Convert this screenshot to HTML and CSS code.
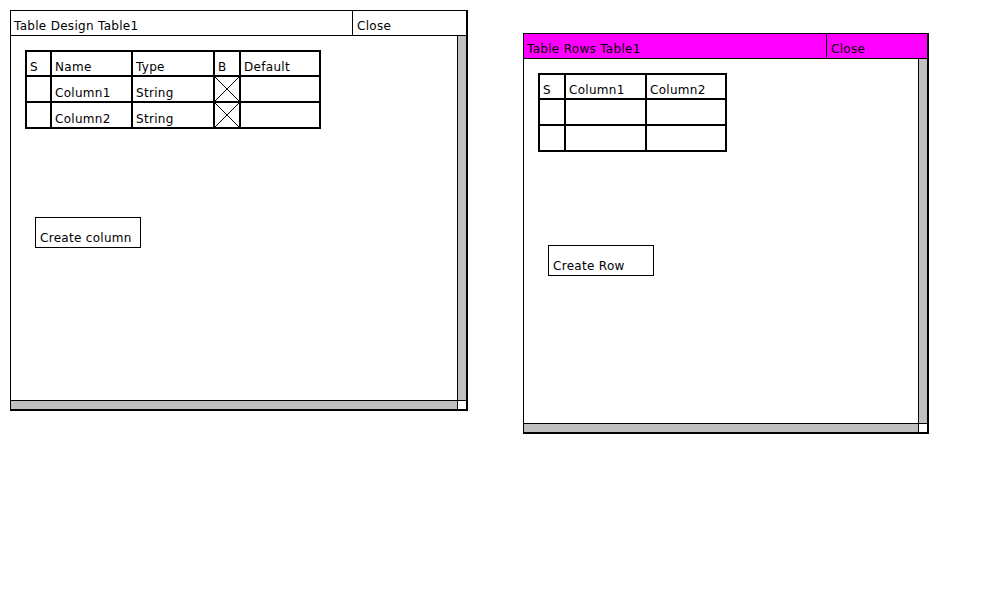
FILE: index.html
```html
<!DOCTYPE html>
<html>
<head>
<meta charset="utf-8">
<title>Tables</title>
<link rel="stylesheet" href="styles.css">
</head>
<body>
<div class="window w1">
  <div class="titlebar">
    <div class="title">Table Design Table1</div>
    <div class="close">Close</div>
  </div>
  <div class="body">
    <div class="content">
      <div class="grid design">
        <div class="cell">S</div>
        <div class="cell">Name</div>
        <div class="cell">Type</div>
        <div class="cell">B</div>
        <div class="cell">Default</div>
        <div class="cell"></div>
        <div class="cell">Column1</div>
        <div class="cell">String</div>
        <div class="cell cross"><svg viewBox="0 0 24 24" preserveAspectRatio="none"><line x1="0" y1="0" x2="24" y2="24"/><line x1="24" y1="0" x2="0" y2="24"/></svg></div>
        <div class="cell"></div>
        <div class="cell"></div>
        <div class="cell">Column2</div>
        <div class="cell">String</div>
        <div class="cell cross"><svg viewBox="0 0 24 24" preserveAspectRatio="none"><line x1="0" y1="0" x2="24" y2="24"/><line x1="24" y1="0" x2="0" y2="24"/></svg></div>
        <div class="cell"></div>
      </div>
      <div class="btn btn-column">Create column</div>
    </div>
    <div class="vscroll"></div>
    <div class="hscroll"></div>
    <div class="corner"></div>
  </div>
</div>

<div class="window w2">
  <div class="titlebar">
    <div class="title">Table Rows Table1</div>
    <div class="close">Close</div>
  </div>
  <div class="body">
    <div class="content">
      <div class="grid rows">
        <div class="cell">S</div>
        <div class="cell">Column1</div>
        <div class="cell">Column2</div>
        <div class="cell"></div>
        <div class="cell"></div>
        <div class="cell"></div>
        <div class="cell"></div>
        <div class="cell"></div>
        <div class="cell"></div>
      </div>
      <div class="btn btn-row">Create Row</div>
    </div>
    <div class="vscroll"></div>
    <div class="hscroll"></div>
    <div class="corner"></div>
  </div>
</div>
</body>
</html>
```

FILE: styles.css
```css
html, body {
  margin: 0;
  background: #fff;
}
body {
  font-family: "DejaVu Sans", sans-serif;
  font-size: 12px;
  line-height: 14px;
  letter-spacing: 0.3px;
  color: #000;
}
.window {
  position: absolute;
  box-sizing: border-box;
  border: 1px solid #000;
  border-right-width: 2px;
  border-bottom-width: 2px;
  background: #fff;
  display: flex;
  flex-direction: column;
}
.w1 { left: 10px; top: 10px; width: 458px; height: 401px; }
.w2 { left: 523px; top: 33px; width: 406px; height: 401px; }

.titlebar {
  display: flex;
  height: 25px;
  flex: none;
  box-sizing: border-box;
  border-bottom: 1px solid #000;
}
.w2 .titlebar { background: #ff00ff; }
.title {
  flex: 1;
  padding: 8px 0 0 3px;
  white-space: nowrap;
}
.close {
  box-sizing: border-box;
  border-left: 1px solid #000;
  padding: 8px 0 0 4px;
}
.w1 .close { width: 114px; }
.w2 .close { width: 101px; }

.body {
  flex: 1;
  min-height: 0;
  display: grid;
  grid-template-columns: 1fr 9px;
  grid-template-rows: 1fr 9px;
}
.content {
  padding: 14px;
  overflow: hidden;
  min-width: 0;
  min-height: 0;
}
.vscroll {
  box-sizing: border-box;
  background: #c0c0c0;
  border-left: 1px solid #000;
}
.hscroll {
  box-sizing: border-box;
  background: #c0c0c0;
  border-top: 1px solid #000;
}
.corner {
  box-sizing: border-box;
  border-left: 1px solid #000;
  border-top: 1px solid #000;
  background: #fff;
}

.grid {
  display: grid;
  width: max-content;
  background: #000;
  padding: 2px;
  gap: 2px;
}
.design {
  grid-template-columns: 23px 79px 80px 24px 78px;
  grid-template-rows: 23px 24px 24px;
}
.rows {
  grid-template-columns: 24px 79px 78px;
  grid-template-rows: 23px 24px 24px;
}
.cell {
  background: #fff;
  box-sizing: border-box;
  display: flex;
  align-items: flex-end;
  padding: 0 3px 1px;
  white-space: nowrap;
  overflow: hidden;
}
.cross { padding: 0; }
.cross svg {
  display: block;
  width: 100%;
  height: 100%;
}
.cross line {
  stroke: #000;
  stroke-width: 1;
  vector-effect: non-scaling-stroke;
}

.btn {
  box-sizing: border-box;
  width: 106px;
  height: 31px;
  border: 1px solid #000;
  padding: 13px 0 0 4px;
  margin-left: 10px;
  white-space: nowrap;
}
.btn-column { margin-top: 88px; }
.btn-row { margin-top: 93px; }
```
